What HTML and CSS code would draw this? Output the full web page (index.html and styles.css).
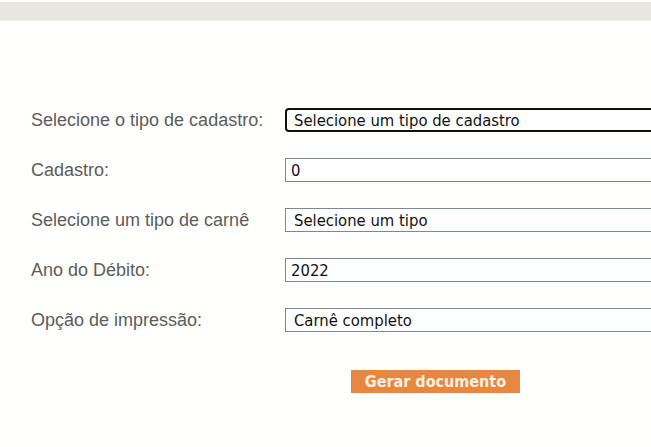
FILE: index.html
```html
<!DOCTYPE html>
<html lang="pt-BR">
<head>
    <meta charset="UTF-8">
    <title>Emissão de carnê</title>
    <link rel="stylesheet" href="styles.css">
</head>
<body>
    <div class="topbar"></div>
    <form class="form">
        <label class="label" for="tipo">Selecione o tipo de cadastro:</label>
        <div class="field focused"><span id="tipo">Selecione um tipo de cadastro</span></div>

        <label class="label" for="cadastro">Cadastro:</label>
        <div class="field input"><span id="cadastro">0</span></div>

        <label class="label" for="carne">Selecione um tipo de carnê</label>
        <div class="field"><span id="carne">Selecione um tipo</span></div>

        <label class="label" for="ano">Ano do Débito:</label>
        <div class="field input"><span id="ano">2022</span></div>

        <label class="label" for="opcao">Opção de impressão:</label>
        <div class="field"><span id="opcao">Carnê completo</span></div>
    </form>
    <div class="actions">
        <button type="button" class="btn">Gerar documento</button>
    </div>
</body>
</html>
```

FILE: styles.css
```css
html, body {
    margin: 0;
    background: #fffffd;
    overflow: hidden;
}
body {
    font-family: "Liberation Sans", Arial, sans-serif;
}
.topbar {
    height: 18px;
    margin-top: 2px;
    background: #e7e7e0;
    border-bottom: 1px solid #f2f2e8;
}
.form {
    display: grid;
    grid-template-columns: 254px 420px;
    row-gap: 26px;
    align-items: center;
    padding: 87px 0 0 31px;
}
.label {
    font-size: 18px;
    color: #5c5c5c;
}
.field {
    box-sizing: border-box;
    height: 24px;
    border: 1px solid #7a8899;
    background: #fff;
    display: flex;
    align-items: center;
    padding-left: 8px;
    font-family: "DejaVu Sans Condensed", "DejaVu Sans", Tahoma, sans-serif;
    font-size: 16.5px;
    color: #111;
}
.field.input {
    padding-left: 5px;
}
.field.focused {
    border: 2px solid #111;
    border-radius: 4px;
    padding-left: 7px;
}
.actions {
    display: flex;
    padding: 38px 0 0 351px;
}
.btn {
    background: #e8873f;
    border: none;
    color: #fdf1e2;
    font-family: "DejaVu Sans Condensed", "DejaVu Sans", Tahoma, sans-serif;
    font-weight: bold;
    font-size: 16px;
    height: 23px;
    width: 169px;
    padding: 0;
}
```
